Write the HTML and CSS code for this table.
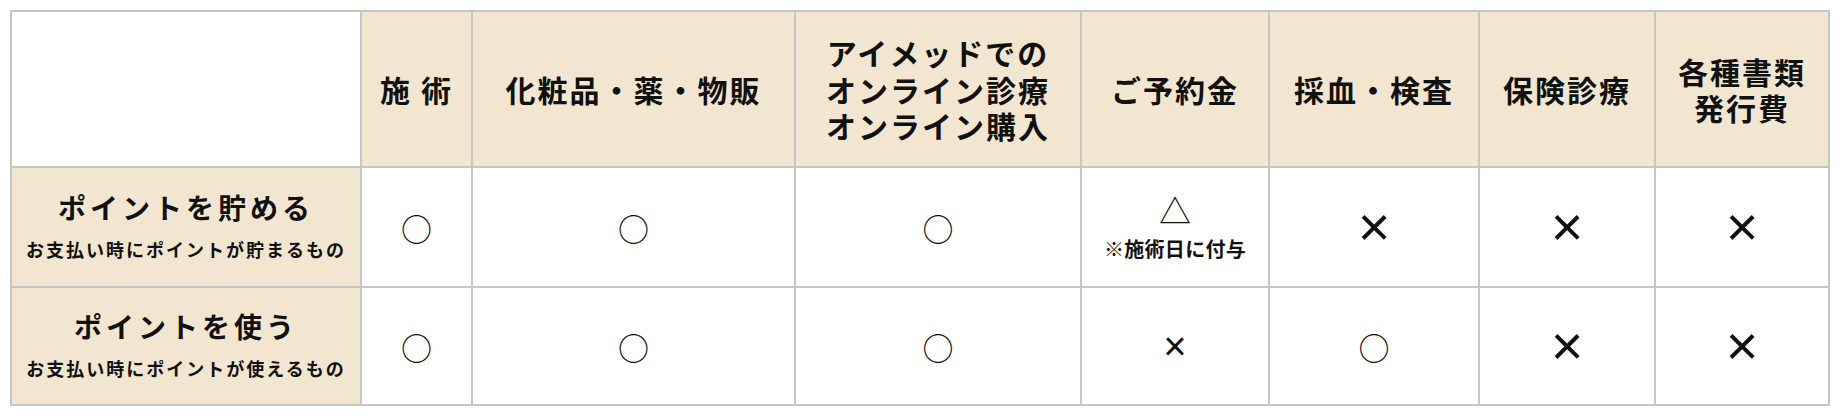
FILE: index.html
```html
<!DOCTYPE html>
<html lang="ja">
<head>
<meta charset="utf-8">
<title>ポイント</title>
<link rel="stylesheet" href="styles.css">
</head>
<body>
<div class="table">
  <div class="cell corner"></div>
  <div class="cell head">施 術</div>
  <div class="cell head">化粧品・薬・物販</div>
  <div class="cell head"><span class="lines"><span>アイメッドでの</span><span>オンライン診療</span><span>オンライン購入</span></span></div>
  <div class="cell head">ご予約金</div>
  <div class="cell head">採血・検査</div>
  <div class="cell head">保険診療</div>
  <div class="cell head"><span class="lines"><span>各種書類</span><span>発行費</span></span></div>

  <div class="cell label"><span class="main">ポイントを貯める</span><span class="sub">お支払い時にポイントが貯まるもの</span></div>
  <div class="cell val"><span class="mark circle">○</span></div>
  <div class="cell val"><span class="mark circle">○</span></div>
  <div class="cell val"><span class="mark circle">○</span></div>
  <div class="cell val stack"><span class="mark tri">△</span><span class="note">※施術日に付与</span></div>
  <div class="cell val"><span class="mark cross">×</span></div>
  <div class="cell val"><span class="mark cross">×</span></div>
  <div class="cell val"><span class="mark cross">×</span></div>

  <div class="cell label"><span class="main">ポイントを使う</span><span class="sub">お支払い時にポイントが使えるもの</span></div>
  <div class="cell val"><span class="mark circle">○</span></div>
  <div class="cell val"><span class="mark circle">○</span></div>
  <div class="cell val"><span class="mark circle">○</span></div>
  <div class="cell val"><span class="mark small-cross">×</span></div>
  <div class="cell val"><span class="mark circle">○</span></div>
  <div class="cell val"><span class="mark cross">×</span></div>
  <div class="cell val"><span class="mark cross">×</span></div>
</div>
</body>
</html>
```
FILE: styles.css
```css
html, body {
  margin: 0;
  padding: 0;
  background: #ffffff;
}
body {
  padding: 10px;
  font-family: "Noto Sans CJK JP", "Noto Sans", sans-serif;
  color: #111111;
}
.table {
  display: grid;
  width: 1820px;
  box-sizing: border-box;
  grid-template-columns: 348px 109px 321px 284px 186px 208px 174px 172px;
  grid-template-rows: 154px 118px 116px;
  gap: 2px;
  padding: 2px;
  background: #c6c6c6;
}
.cell {
  display: flex;
  align-items: center;
  justify-content: center;
  text-align: center;
  background: #ffffff;
}
.corner {
  background: #ffffff;
}
.head {
  background: #f2e6d0;
  font-weight: 700;
  font-size: 30px;
  line-height: 36.5px;
  letter-spacing: 2px;
}
.lines {
  display: flex;
  flex-direction: column;
  align-items: center;
}
.lines span {
  display: block;
  height: 36.5px;
  line-height: 36.5px;
}
.label {
  background: #f2e6d0;
  flex-direction: column;
  font-weight: 700;
  gap: 12px;
  padding-bottom: 4px;
}
.label .main {
  font-size: 28px;
  line-height: 36px;
  letter-spacing: 4px;
}
.label .sub {
  font-size: 18px;
  line-height: 24px;
  letter-spacing: 2px;
}
.stack {
  flex-direction: column;
  gap: 12px;
}
.mark {
  font-weight: 400;
  line-height: 1;
}
.circle {
  font-size: 31px;
}
.tri {
  font-size: 32px;
}
.cross {
  font-size: 56px;
  font-family: "Liberation Sans", sans-serif;
}
.small-cross {
  font-size: 40px;
  font-family: "Liberation Sans", sans-serif;
}
.note {
  font-size: 20px;
  font-weight: 700;
  line-height: 24px;
  letter-spacing: 0.3px;
}
```
